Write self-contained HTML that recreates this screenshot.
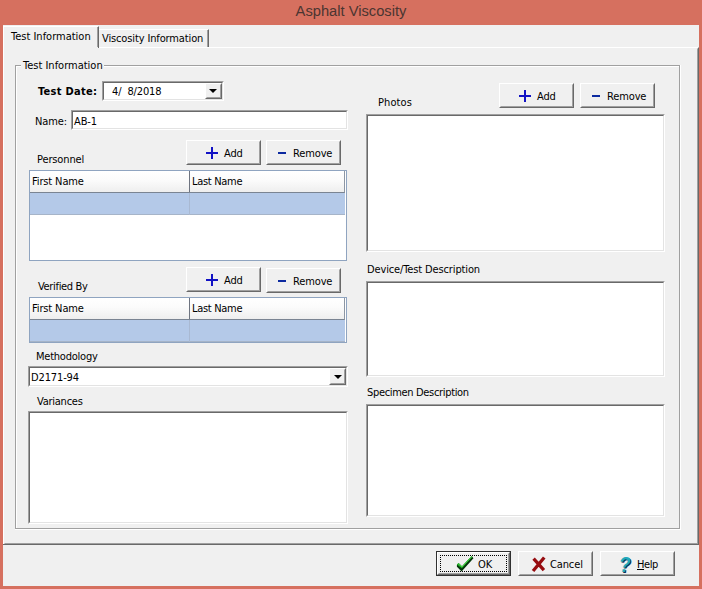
<!DOCTYPE html>
<html><head><meta charset="utf-8"><title>Asphalt Viscosity</title>
<style>
html,body{margin:0;padding:0;}
body{width:702px;height:589px;position:relative;overflow:hidden;background:#d6705f;font-family:"DejaVu Sans Condensed","Liberation Sans",sans-serif;font-size:11px;letter-spacing:-0.13px;color:#000;}
div,span{position:absolute;box-sizing:border-box;white-space:pre;}
.t{line-height:13px;height:13px;}
.title{left:0;top:2px;width:702px;text-align:center;font-family:"Liberation Sans",sans-serif;font-size:14.7px;letter-spacing:0;line-height:18px;height:18px;color:#4b3531;}
.win{left:3px;top:25px;width:696px;height:561px;background:#f0f0f0;}
.sunk{background:#fff;border:1px solid;border-color:#a0a0a0 #fff #fff #a0a0a0;}
.sunk:before{content:"";position:absolute;left:0;top:0;right:0;bottom:0;border:1px solid;border-color:#696969 #e3e3e3 #e3e3e3 #696969;}
.btn{background:#f0f0f0;border:1px solid;border-color:#fff #696969 #696969 #fff;}
.btn:before{content:"";position:absolute;left:0;top:0;right:0;bottom:0;border:1px solid;border-color:#f0f0f0 #a0a0a0 #a0a0a0 #f0f0f0;}
.grid{background:#fff;border:1px solid #8fa4c0;}
.gh{background:linear-gradient(#ffffff 0%,#fbfbfb 45%,#eeeeee 100%);border-bottom:1px solid #7a8492;border-right:1px solid #8d96a3;}
.sel{background:#b4c9e8;border-bottom:1px solid #a6b4c8;}
</style></head><body>
<div class="title">Asphalt Viscosity</div>
<div class="win"></div>

<!-- tab panel -->
<div style="left:3px;top:47px;width:696px;height:498px;border:1px solid;border-color:#fff #696969 #696969 #fff;"></div>
<div style="left:4px;top:48px;width:694px;height:496px;border:1px solid;border-color:#f0f0f0 #a0a0a0 #a0a0a0 #f0f0f0;"></div>
<div style="left:3px;top:544px;width:3px;height:1px;background:#696969;"></div>
<!-- tab 2 (inactive) -->
<div style="left:98px;top:29px;width:111px;height:18px;border:1px solid;border-color:#fff #696969 transparent #fff;border-bottom:0;"></div>
<div style="left:99px;top:30px;width:109px;height:17px;border-right:1px solid #a0a0a0;"></div>
<span class="t" style="left:102px;top:32px;">Viscosity Information</span>
<!-- tab 1 (active) -->
<div style="left:3px;top:26px;width:96px;height:22px;background:#f0f0f0;border:1px solid;border-color:#fff #696969 transparent #fff;border-bottom:0;"></div>
<div style="left:4px;top:27px;width:94px;height:20px;border-right:1px solid #a0a0a0;"></div>
<div style="left:4px;top:47px;width:94px;height:2px;background:#f0f0f0;"></div>
<span class="t" style="left:11px;top:30px;letter-spacing:0;">Test Information</span>

<!-- group box -->
<div style="left:15px;top:65px;width:666px;height:465px;border:1px solid #fff;"></div>
<div style="left:15px;top:65px;width:665px;height:464px;border:1px solid #a0a0a0;"></div>
<div style="left:16px;top:66px;width:663px;height:462px;border:1px solid #fff;border-right:0;border-bottom:0;"></div>
<span class="t" style="left:21px;top:59px;background:#f0f0f0;padding:0 1px 0 2px;letter-spacing:0;">Test Information</span>

<!-- date -->
<span class="t" style="left:38px;top:85px;font-weight:bold;letter-spacing:0.3px;">Test Date:</span>
<div class="sunk" style="left:102px;top:81px;width:122px;height:20px;"></div>
<span class="t" style="left:112px;top:85px;">4/  8/2018</span>
<div class="btn" style="left:205px;top:83px;width:17px;height:16px;"></div>
<div style="left:209px;top:89px;width:0;height:0;border:4px solid transparent;border-top-color:#000;border-bottom:0;"></div>

<!-- name -->
<span class="t" style="left:35px;top:115px;">Name:</span>
<div class="sunk" style="left:71px;top:110px;width:277px;height:20px;"></div>
<span class="t" style="left:74px;top:115px;">AB-1</span>

<!-- personnel -->
<span class="t" style="left:37px;top:153px;">Personnel</span>
<div class="btn" style="left:186px;top:140px;width:75px;height:25px;"></div>
<svg style="position:absolute;left:206px;top:147px" width="12" height="12"><path d="M5 0h2v5h5v2h-5v5h-2v-5h-5v-2h5z" fill="#1212c4"/></svg>
<span class="t" style="left:224px;top:147px;">Add</span>
<div class="btn" style="left:266px;top:140px;width:75px;height:25px;"></div>
<div style="left:278px;top:152px;width:8px;height:2px;background:#0c2aa0;"></div>
<span class="t" style="left:293px;top:147px;">Remove</span>

<div class="grid" style="left:29px;top:170px;width:318px;height:91px;"></div>
<div class="gh" style="left:30px;top:171px;width:315px;height:22px;"></div>
<div style="left:189px;top:171px;width:1px;height:21px;background:#6e7480;"></div>
<div class="sel" style="left:30px;top:193px;width:315px;height:22px;"></div>
<div style="left:189px;top:193px;width:1px;height:22px;background:#a9b9d2;"></div>
<span class="t" style="left:32px;top:175px;">First Name</span>
<span class="t" style="left:192px;top:175px;letter-spacing:-0.3px;">Last Name</span>

<!-- verified by -->
<span class="t" style="left:38px;top:280px;letter-spacing:-0.33px;">Verified By</span>
<div class="btn" style="left:186px;top:267px;width:75px;height:25px;"></div>
<svg style="position:absolute;left:206px;top:274px" width="12" height="12"><path d="M5 0h2v5h5v2h-5v5h-2v-5h-5v-2h5z" fill="#1212c4"/></svg>
<span class="t" style="left:224px;top:274px;">Add</span>
<div class="btn" style="left:266px;top:268px;width:75px;height:25px;"></div>
<div style="left:278px;top:280px;width:8px;height:2px;background:#0c2aa0;"></div>
<span class="t" style="left:293px;top:275px;">Remove</span>

<div class="grid" style="left:29px;top:297px;width:318px;height:46px;"></div>
<div class="gh" style="left:30px;top:298px;width:315px;height:22px;"></div>
<div style="left:189px;top:298px;width:1px;height:21px;background:#6e7480;"></div>
<div class="sel" style="left:30px;top:320px;width:315px;height:22px;"></div>
<div style="left:189px;top:320px;width:1px;height:22px;background:#a9b9d2;"></div>
<span class="t" style="left:32px;top:302px;">First Name</span>
<span class="t" style="left:192px;top:302px;letter-spacing:-0.3px;">Last Name</span>

<!-- methodology -->
<span class="t" style="left:36px;top:350px;letter-spacing:-0.23px;">Methodology</span>
<div class="sunk" style="left:28px;top:366px;width:320px;height:21px;"></div>
<span class="t" style="left:31px;top:371px;">D2171-94</span>
<div class="btn" style="left:329px;top:368px;width:17px;height:17px;"></div>
<div style="left:334px;top:375px;width:0;height:0;border:4px solid transparent;border-top-color:#000;border-bottom:0;"></div>

<!-- variances -->
<span class="t" style="left:37px;top:395px;letter-spacing:-0.25px;">Variances</span>
<div class="sunk" style="left:28px;top:411px;width:320px;height:113px;"></div>

<!-- photos -->
<span class="t" style="left:378px;top:96px;letter-spacing:0.1px;">Photos</span>
<div class="btn" style="left:499px;top:83px;width:75px;height:25px;"></div>
<svg style="position:absolute;left:519px;top:90px" width="12" height="12"><path d="M5 0h2v5h5v2h-5v5h-2v-5h-5v-2h5z" fill="#1212c4"/></svg>
<span class="t" style="left:537px;top:90px;">Add</span>
<div class="btn" style="left:580px;top:83px;width:75px;height:25px;"></div>
<div style="left:592px;top:95px;width:8px;height:2px;background:#0c2aa0;"></div>
<span class="t" style="left:607px;top:90px;">Remove</span>
<div class="sunk" style="left:366px;top:114px;width:299px;height:138px;"></div>

<span class="t" style="left:367px;top:263px;">Device/Test Description</span>
<div class="sunk" style="left:366px;top:281px;width:299px;height:96px;"></div>
<span class="t" style="left:367px;top:386px;letter-spacing:-0.33px;">Specimen Description</span>
<div class="sunk" style="left:366px;top:404px;width:299px;height:113px;"></div>

<!-- bottom buttons -->
<div style="left:436px;top:551px;width:75px;height:25px;border:1px solid #303030;"></div>
<div class="btn" style="left:437px;top:552px;width:73px;height:23px;"></div>
<div style="left:440px;top:555px;width:67px;height:17px;border:1px dotted #000;"></div>
<svg style="position:absolute;left:450px;top:550px" width="32" height="28" viewBox="450 550 32 28"><path d="M456.9 564.9 L458.6 563 L462 566.4 L471.7 555.9 L473.5 558.3 L461.6 571.5 L456.9 566.7 Z" fill="#04360a"/><path d="M456.9 564.6 L458.5 562.9 L462 566.3 L471.7 555.9 L472.3 556.8 L461.9 568.2 L457.4 565.0 Z" fill="#1fae22"/><path d="M458.2 563.6 L462 567.0 L471.6 556.7" fill="none" stroke="#4bd84b" stroke-width="0.9"/></svg>
<span class="t" style="left:478px;top:558px;">OK</span>

<div class="btn" style="left:518px;top:551px;width:75px;height:25px;"></div>
<svg style="position:absolute;left:526px;top:552px" width="26" height="24" viewBox="526 552 26 24"><path d="M534.7 559.8 L542.8 568.8 M534.1 569.7 L543.2 558.7" fill="none" stroke="#960c10" stroke-width="3.3" stroke-linecap="square"/></svg>
<span class="t" style="left:550px;top:558px;">Cancel</span>

<div class="btn" style="left:600px;top:551px;width:75px;height:25px;"></div>
<span style="left:620px;top:555px;font-family:'Liberation Sans',sans-serif;font-size:21.5px;line-height:22px;font-weight:bold;letter-spacing:0;color:#0b3358;transform-origin:0 50%;transform:skewX(-8deg) scaleX(0.9);">?</span>
<span style="left:619px;top:554px;font-family:'Liberation Sans',sans-serif;font-size:21.5px;line-height:22px;font-weight:bold;letter-spacing:0;color:#22a9bb;transform-origin:0 50%;transform:skewX(-8deg) scaleX(0.9);">?</span>
<span class="t" style="left:637px;top:558px;letter-spacing:-0.4px;"><u>H</u>elp</span>
</body></html>
